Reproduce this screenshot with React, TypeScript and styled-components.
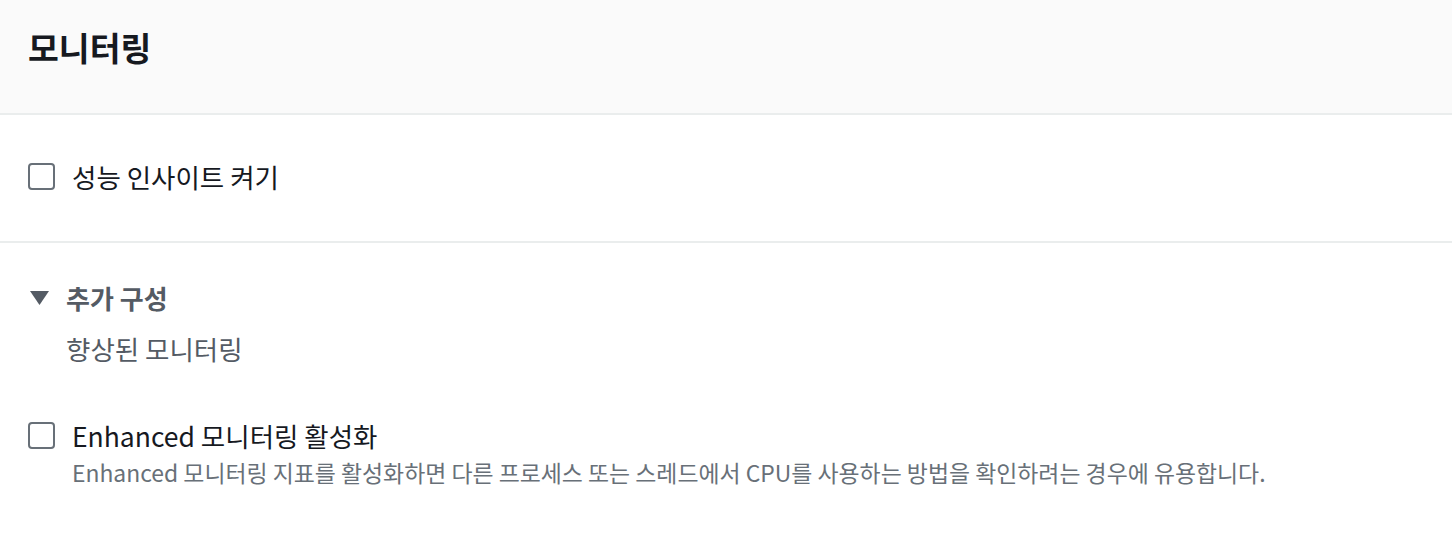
import React from 'react'
import styled, { createGlobalStyle } from 'styled-components'

const Global = createGlobalStyle`
  body {
    margin: 0;
    background: #ffffff;
    font-family: "Noto Sans CJK KR", "Noto Sans", sans-serif;
    color: #16191f;
  }
`

const Panel = styled.div`
  width: 1452px;
`

const Header = styled.div`
  background: #fafafa;
  height: 115px;
  border-bottom: 2px solid #eaeded;
  display: flex;
  align-items: center;
  padding: 0 28px;
  box-sizing: border-box;
`

const Title = styled.h2`
  margin: 0 0 20px;
  font-size: 33.5px;
  line-height: 40px;
  font-weight: 700;
  color: #16191f;
`

const Section = styled.div<{ $pad: string; $divider?: boolean }>`
  padding: ${(p) => p.$pad};
  border-bottom: ${(p) => (p.$divider ? '2px solid #eaeded' : 'none')};
`

const CheckRow = styled.label`
  display: flex;
  align-items: flex-start;
  gap: 17px;
  cursor: pointer;
`

const Box = styled.span`
  width: 27px;
  height: 27px;
  box-sizing: border-box;
  border: 2px solid #687078;
  border-radius: 4px;
  flex: none;
  margin-top: 1px;
  background: #fff;
`

const CheckText = styled.div`
  display: flex;
  flex-direction: column;
`

const Label = styled.span`
  font-size: 26.5px;
  line-height: 30px;
  color: #16191f;
`

const Hint = styled.span`
  font-size: 22.9px;
  line-height: 28px;
  color: #687078;
  margin-top: 7px;
`

const Expander = styled.div`
  display: flex;
  align-items: center;
  gap: 17px;
  color: #545b64;
  font-size: 26px;
  line-height: 30px;
  font-weight: 700;
  padding-left: 30px;
`

const Caret = styled.svg`
  width: 19px;
  height: 14px;
  fill: #545b64;
`

const SubHeading = styled.div`
  font-size: 26.5px;
  line-height: 30px;
  color: #545b64;
  padding-left: 66px;
  margin-top: 21px;
`

const Body = styled.div`
  margin-top: 57px;
  padding-left: 28px;
`

type CheckProps = { label: string; hint?: string }

const Check: React.FC<CheckProps> = ({ label, hint }) => (
  <CheckRow>
    <Box />
    <CheckText>
      <Label>{label}</Label>
      {hint && <Hint>{hint}</Hint>}
    </CheckText>
  </CheckRow>
)

export default function App() {
  return (
    <Panel>
      <Global />
      <Header>
        <Title>모니터링</Title>
      </Header>
      <Section $pad="47px 28px 49px" $divider>
        <Check label="성능 인사이트 켜기" />
      </Section>
      <Section $pad="40px 0 0">
        <Expander>
          <Caret viewBox="0 0 19 14">
            <polygon points="0,0 19,0 9.5,14" />
          </Caret>
          추가 구성
        </Expander>
        <SubHeading>향상된 모니터링</SubHeading>
        <Body>
          <Check
            label="Enhanced 모니터링 활성화"
            hint="Enhanced 모니터링 지표를 활성화하면 다른 프로세스 또는 스레드에서 CPU를 사용하는 방법을 확인하려는 경우에 유용합니다."
          />
        </Body>
      </Section>
    </Panel>
  )
}
